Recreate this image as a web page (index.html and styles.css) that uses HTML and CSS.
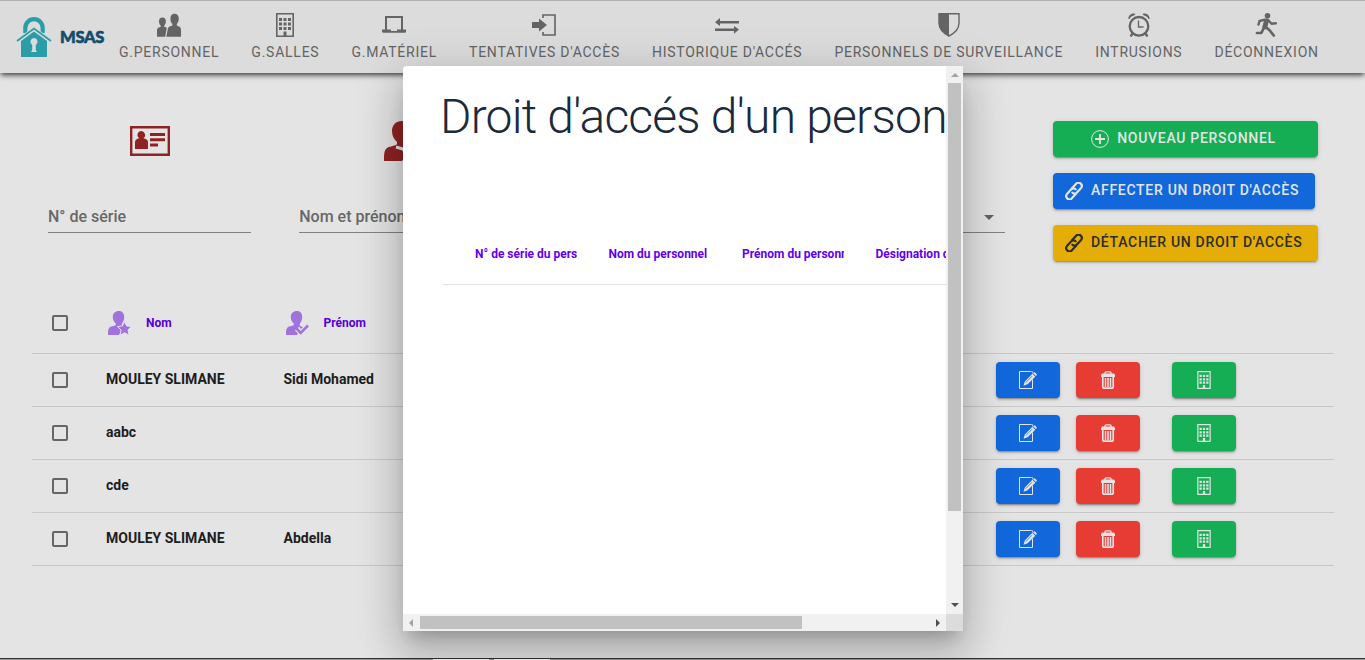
FILE: index.html
```html
<!DOCTYPE html>
<html lang="fr">
<head>
<meta charset="utf-8">
<title>MSAS</title>
<link rel="stylesheet" href="styles.css">
</head>
<body>
<svg class="sprite" xmlns="http://www.w3.org/2000/svg">
  <symbol id="building" viewBox="0 0 24 24"><path fill="none" stroke="currentColor" stroke-width="1.6" d="M3.800.8h16.400v22.400H3.800z"/><path fill="currentColor" d="M6 5h3v3H6zM10.500 5h3v3h-3zM15 5h3v3h-3zM6 9.500h3v3H6zM10.500 9.500h3v3h-3zM15 9.500h3v3h-3zM6 14h3v3H6zM10.500 14h3v3h-3zM15 14h3v3h-3zM10.500 18.500h3V23h-3z"/></symbol>
  <symbol id="link" viewBox="0 0 18 18"><g transform="rotate(-48 9 9)" fill="none" stroke="currentColor" stroke-width="2.200"><path d="M9 12.300H1.500A3.200 3.200 0 0 1-1 9a3.200 3.200 0 0 1 3-3.200h6.500a3 3 0 0 1 2.700 4"/><path d="M9 5.700h7.500A3.200 3.200 0 0 1 19 9a3.200 3.200 0 0 1-3 3.200H9.500a3 3 0 0 1-2.700-4"/></g></symbol>
  <symbol id="edit" viewBox="0 0 18 18"><path fill="none" stroke="currentColor" stroke-width="1" d="M11.500.5H.5v17h13v-9"/><path fill="none" stroke="currentColor" stroke-width=".7" d="M11 .5h2.500v2"/><path fill="currentColor" d="M4.500 14.800l1.300-4.300 7.600-7.700 2.900 2.900-7.700 7.600zM14 2.200l.8-.8c.8-.7 3.600 2 2.900 2.900l-.8.8z"/><path d="M6.800 11.600l6.200-6.400" stroke="#1268db" stroke-width=".7"/></symbol>
  <symbol id="trash" viewBox="0 0 18 18"><path fill="none" stroke="currentColor" stroke-width="1.300" d="M6 3V1.800Q6 .8 7 .8h4q1 0 1 1V3"/><path fill="currentColor" d="M3 2.600h12L16 4v2H2V4z"/><path fill="none" stroke="currentColor" stroke-width="1.700" d="M3.800 6v10q0 1.200 1.200 1.200h8q1.200 0 1.200-1.200V6"/><path fill="none" stroke="currentColor" stroke-width="1.500" d="M6.500 7v9M9 7v9M11.500 7v9"/></symbol>
  <symbol id="user" viewBox="0 0 40 40"><path fill="currentColor" d="M18 0c6 0 9 4 9 10 0 5-2 9-4 11v3c0 1 3 2 6 3L18 40H0c0-6 0-11 3-13 3-2 9-2 10-4v-2c-3-3-5-6-5-11C8 4 12 0 18 0z"/></symbol>
</svg>

<header class="topbar">
  <div class="brand">
    <svg width="36" height="42" viewBox="0 0 36 42"><g fill="none" stroke="#2b9da6"><path stroke-width="4.200" d="M9.300 17v-5a8.700 8.900 0 0 1 17.400 0v5"/></g><path fill="none" stroke="#dcdcdc" stroke-width="5" d="M3 25L18 13.500 33 25"/><path fill="none" stroke="#2b9da6" stroke-width="1.800" d="M1 25L18 12.500l17 12.500"/><path fill="#2b9da6" d="M5 25l13-9.500L31 25v16H5z"/><path fill="#dcdcdc" d="M18 22a3.800 3.800 0 0 1 1.800 7V34l1.200 2h-6l1.200-2v-5A3.800 3.800 0 0 1 18 22z"/></svg>
    <span class="brand-name">MSAS</span>
  </div>
  <nav class="nav">
    <a class="nav-item"><svg width="24" height="24" viewBox="0 0 24 24"><path fill="currentColor" d="M5.500 4.500C8 4.500 9 6.300 8.800 8.500c0 2-.8 3.500-1.600 4.200v1c1 .5 2 .7 2.600 1L8.200 23.800H0V17c0-2.300 2-2.500 3.800-3.300v-1C2.800 12 2 10.500 2 8.500 2 6 3 4.500 5.500 4.500zM17.500.8c3 0 4.300 2 4.300 5 0 2.600-1 4.200-2 5.200v1.500c1.600.8 4.200 1.200 4.200 4v7.300H9.300l1.500-7.800c.4-2.500 3-2.800 4.600-3.500V11c-1.200-1-2-2.600-2-5.200 0-3 1.300-5 4.100-5z"/></svg><span>G.PERSONNEL</span></a>
    <a class="nav-item"><svg width="24" height="24"><use href="#building"/></svg><span>G.SALLES</span></a>
    <a class="nav-item"><svg width="24" height="24" viewBox="0 0 24 24"><path fill="none" stroke="currentColor" stroke-width="2" d="M4 17V4h16v13"/><path fill="currentColor" d="M0 16.500h9V18h6v-1.500h9v1.700c0 1-.5 1.500-1.500 1.500h-21C.5 19.700 0 19 0 18.200z"/></svg><span>G.MATÉRIEL</span></a>
    <a class="nav-item"><svg width="24" height="24" viewBox="0 0 24 24"><path fill="none" stroke="currentColor" stroke-width="1.600" d="M11 5V2h12v20H11v-3"/><path fill="currentColor" d="M0 9h7V5.500l8 6.500-8 6.500V15H0z"/></svg><span>TENTATIVES D'ACCÈS</span></a>
    <a class="nav-item"><svg width="24" height="24" viewBox="0 0 24 24"><path fill="currentColor" d="M5 5L0 9.200 5 13v-2.500h19V8H5zM19 13v2.500H0V18h19v2.800l5-4.300z"/></svg><span>HISTORIQUE D'ACCÉS</span></a>
    <a class="nav-item"><svg width="24" height="24" viewBox="0 0 24 24"><path fill="none" stroke="currentColor" stroke-width="1.400" d="M2 .8h20V10c0 6-5 10.500-10 13C7 20.500 2 16 2 10z"/><path fill="currentColor" d="M2 .8h10V23C7 20.500 2 16 2 10z"/></svg><span>PERSONNELS DE SURVEILLANCE</span></a>
    <a class="nav-item"><svg width="24" height="24" viewBox="0 0 24 24"><g fill="none" stroke="currentColor" stroke-width="2.300"><circle cx="12" cy="13.300" r="9.300"/><path stroke-width="1.300" d="M11.500 7.500v6.500h5"/><path d="M6 20l-2.500 3.500M18 20l2.500 3.500"/></g><path fill="currentColor" d="M1.500 6C1 3 4-.5 8 .7 9 1 8 2 7 2.400 4.500 3.200 3.500 4 2.500 6zM22.500 6c.5-3-2.500-6.500-6.500-5.300-1 .3 0 1.300 1 1.700 2.500.8 3.500 1.600 4.500 3.600z"/></svg><span>INTRUSIONS</span></a>
    <a class="nav-item"><svg width="24" height="24" viewBox="0 0 24 24"><circle cx="12.500" cy="2.800" r="2.800" fill="currentColor"/><g fill="none" stroke="currentColor" stroke-linejoin="round" stroke-linecap="round"><path stroke-width="2.400" d="M3.500 11.500l1-3.500L9 6.800l4 .2 3.500 3.700 4.300-.4"/><path stroke-width="4.800" d="M11.300 8.500L9.800 14"/><path stroke-width="2.700" d="M9.300 14l-3 6H2M10.800 14l4 3.500 4 5"/></g></svg><span>DÉCONNEXION</span></a>
  </nav>
</header>

<main class="page">
  <section class="tools">
    <div class="filters">
      <div class="filter">
        <svg class="filter-icon" width="40" height="40" viewBox="0 0 40 40"><path fill="none" stroke="currentColor" stroke-width="2.400" d="M1.200 6.200h37.600v27.600H1.200z"/><path fill="currentColor" d="M11 10a4 4 0 0 1 2.500 7.200c2 .6 4.500 1.300 4.500 4V28H5v-6.800c0-2.700 2-3.400 4-4A4 4 0 0 1 11 10zM20 12h15v3H20zM20 17.200h15v3H20zM20 22.500h8v3h-8z"/></svg>
        <label class="field">N° de série</label>
      </div>
      <div class="filter">
        <svg class="filter-icon" width="34" height="40" viewBox="0 0 34 40"><use href="#user" width="40" height="40"/><path d="M12 26l7 2 5 8 8-10" fill="none" stroke="#e4e4e4" stroke-width="3"/></svg>
        <label class="field">Nom et prénom</label>
      </div>
      <div class="filter"><div class="filter-icon blank"></div><label class="field"></label></div>
      <div class="filter"><div class="filter-icon blank"></div><label class="field"><i class="caret"></i></label></div>
    </div>
    <div class="actions">
      <button class="btn green wide"><svg width="18" height="18" viewBox="0 0 18 18" fill="none" stroke="currentColor"><circle cx="9" cy="9" r="8.400"/><path stroke-width="1.800" d="M9 4v10M4 9h10"/></svg><span>NOUVEAU PERSONNEL</span></button>
      <button class="btn blue"><svg width="18" height="18"><use href="#link"/></svg><span>AFFECTER UN DROIT D'ACCÈS</span></button>
      <button class="btn amber"><svg width="18" height="18"><use href="#link"/></svg><span>DÉTACHER UN DROIT D'ACCÈS</span></button>
    </div>
  </section>

  <section class="table">
    <div class="row head">
      <i class="check"></i>
      <div class="cell"><svg width="26" height="26" viewBox="0 0 26 26"><use href="#user" width="24" height="24" x="2" y="1"/><path fill="currentColor" stroke="#e4e4e4" stroke-width="1" d="M18.500 11.500l2.200 4.500 4.800.6-3.500 3.400 1 5.200-4.500-2.500-4.500 2.500 1-5.200-3.500-3.400 4.800-.6z"/></svg>Nom</div>
      <div class="cell"><svg width="26" height="26" viewBox="0 0 26 26"><use href="#user" width="24" height="24" x="2" y="1"/><path fill="none" stroke="#e4e4e4" stroke-width="5.500" d="M13 18.500l4 4.500 8-8"/><path fill="none" stroke="currentColor" stroke-width="2.600" d="M12.500 18.500l4.200 4.300 7.300-7.300"/></svg>Prénom</div>
    </div>
    <div class="row"><i class="check"></i><div class="cell">MOULEY SLIMANE</div><div class="cell">Sidi Mohamed</div>
      <button class="btn blue"><svg width="18" height="18"><use href="#edit"/></svg></button><button class="btn red"><svg width="18" height="18"><use href="#trash"/></svg></button><button class="btn green"><svg width="18" height="18"><use href="#building"/></svg></button></div>
    <div class="row"><i class="check"></i><div class="cell">aabc</div><div class="cell"></div>
      <button class="btn blue"><svg width="18" height="18"><use href="#edit"/></svg></button><button class="btn red"><svg width="18" height="18"><use href="#trash"/></svg></button><button class="btn green"><svg width="18" height="18"><use href="#building"/></svg></button></div>
    <div class="row"><i class="check"></i><div class="cell">cde</div><div class="cell"></div>
      <button class="btn blue"><svg width="18" height="18"><use href="#edit"/></svg></button><button class="btn red"><svg width="18" height="18"><use href="#trash"/></svg></button><button class="btn green"><svg width="18" height="18"><use href="#building"/></svg></button></div>
    <div class="row"><i class="check"></i><div class="cell">MOULEY SLIMANE</div><div class="cell">Abdella</div>
      <button class="btn blue"><svg width="18" height="18"><use href="#edit"/></svg></button><button class="btn red"><svg width="18" height="18"><use href="#trash"/></svg></button><button class="btn green"><svg width="18" height="18"><use href="#building"/></svg></button></div>
  </section>
</main>
<footer class="strip"><i></i><i></i></footer>

<div class="dialog">
  <div class="dialog-view">
    <h1>Droit d'accés d'un personnel</h1>
    <div class="dialog-head"><span>N° de série du personnel</span><span>Nom du personnel</span><span>Prénom du personnel</span><span>Désignation de salle</span></div>
  </div>
  <div class="vbar"><i class="arrow up"></i><i class="thumb"></i><i class="arrow down"></i></div>
  <div class="hbar"><i class="arrow left"></i><i class="thumb"></i><i class="arrow right"></i></div>
  <div class="corner"></div>
</div>
</body>
</html>
```
FILE: styles.css
```css
* { box-sizing: border-box; }
body {
  margin: 0;
  height: 660px;
  overflow: hidden;
  display: flex;
  flex-direction: column;
  background: #e4e4e4;
  font-family: Roboto, sans-serif;
  font-size: 14px;
  color: #1d1d1d;
}
svg { display: block; flex: none; }
.sprite { position: absolute; width: 0; height: 0; }

.topbar {
  flex: none;
  display: flex;
  height: 73px;
  border-top: 1px solid #b0b0b0;
  background: #dcdcdc;
  box-shadow: 0 3px 5px -1px rgba(0, 0, 0, .7), 0 1px 10px rgba(0, 0, 0, .12);
}
.brand { display: flex; width: 103px; padding: 15px 0 0 16px; flex: none; }
.brand-name {
  margin: 11px 0 0 8px;
  font: 900 16.500px/20px Lato, sans-serif;
  letter-spacing: -.3px;
  color: #124d6b;
  -webkit-text-stroke: .6px #124d6b;
}
.nav { display: flex; }
.nav-item {
  display: flex;
  flex-direction: column;
  align-items: center;
  padding: 12px 16px 0;
  color: #646464;
  letter-spacing: .754px;
  line-height: 20px;
  white-space: nowrap;
}
.nav-item span { margin-top: 5px; }

.page { flex: 1; padding: 48px 31px 0 32px; }
.tools { display: flex; height: 172px; padding-left: 16px; gap: 48px; }
.filters { display: grid; grid-template-columns: repeat(4, 1fr); gap: 48px; width: 957px; }
.filter { display: flex; flex-direction: column; align-items: center; color: #8f2323; }
.filter-icon { height: 40px; }
.field {
  width: 100%;
  height: 32px;
  margin-top: 40px;
  border-bottom: 1px solid #818181;
  font-size: 16px;
  font-weight: 500;
  line-height: 31px;
  color: #686868;
}
.caret {
  display: block;
  margin: 14px 11px 0 auto;
  width: 10px;
  border: 5px solid transparent;
  border-top-color: #646464;
  border-bottom: 0;
}
.actions { display: flex; flex-direction: column; align-items: flex-start; gap: 16px; }

.btn {
  display: flex;
  align-items: center;
  justify-content: center;
  gap: 8px;
  height: 36px;
  padding: 0;
  border: 0;
  border-radius: 4px;
  font: 500 14px/20px Roboto, sans-serif;
  letter-spacing: .71px;
  white-space: nowrap;
  color: #e4e4e4;
  box-shadow: 0 3px 1px -2px rgba(0, 0, 0, .2), 0 2px 2px rgba(0, 0, 0, .14), 0 1px 5px rgba(0, 0, 0, .12);
}
.btn span { padding-bottom: 2px; }
.actions .btn { justify-content: flex-start; padding-left: 12px; }
.actions .wide { width: 265px; justify-content: center; padding: 0 4px 0 0; }
.actions .blue { width: 262px; }
.actions .amber { width: 265px; }
.green { background: #15ae54; }
.blue { background: #1268db; }
.red { background: #e63c34; }
.amber { background: #e4ad07; color: #2d2d2d; }

.row {
  display: grid;
  grid-template-columns: 74px 177.500px 1fr 64px 64px 64px;
  align-items: center;
  height: 53px;
  padding-right: 98px;
  border-bottom: 1px solid #c8c8c8;
  font-weight: 700;
}
.row.head { height: 61px; font-size: 12px; color: #5600d8; }
.cell { display: flex; align-items: center; gap: 14px; padding-bottom: 2px; }
.head .cell { padding-bottom: 0; }
.cell svg { color: #a072de; }
.row .btn { width: 64px; }
.row .red { margin-left: 16px; }
.row .green { margin-left: 48px; }
.row:not(.head) { padding-right: 146px; }
.check { width: 16px; height: 16px; margin-left: 20px; border: 2px solid #666; border-radius: 2px; }

.strip {
  display: flex;
  height: 2px;
  gap: 5px;
  padding-left: 433px;
  border-top: 1px solid #333;
  background: #999;
}
.strip i { width: 56px; background: #fff; }

.dialog {
  position: absolute;
  left: 403px;
  top: 66px;
  display: grid;
  grid-template: 548px 17px / 543px 17px;
  overflow: hidden;
  border-radius: 4px 0 0 0;
  background: #fff;
  box-shadow: 0 11px 15px -7px rgba(0, 0, 0, .2), 0 24px 38px 3px rgba(0, 0, 0, .14), 0 9px 46px 8px rgba(0, 0, 0, .12);
}
.dialog-view { overflow: hidden; padding: 21px 0 0 37px; }
.dialog-view h1 {
  margin: 0;
  font-size: 48px;
  font-weight: 300;
  line-height: 60px;
  letter-spacing: -.78px;
  white-space: nowrap;
  color: #1b2a3c;
}
.dialog-head {
  display: grid;
  grid-template-columns: repeat(4, 102px);
  column-gap: 31.500px;
  width: 700px;
  height: 61px;
  margin: 77px 0 0 3px;
  padding-left: 32px;
  border-bottom: 1px solid #e0e0e0;
  font-size: 12px;
  font-weight: 700;
  line-height: 60px;
  color: #6200ee;
}
.dialog-head span { overflow: hidden; white-space: nowrap; }
.vbar, .hbar { display: flex; align-items: center; background: #f1f1f1; }
.vbar { flex-direction: column; }
.corner { background: #dcdcdc; }
.thumb { background: #c1c1c1; }
.vbar .thumb { width: 13px; height: 428px; margin-bottom: auto; }
.hbar .thumb { width: 382px; height: 13px; margin-right: auto; }
.arrow { width: 17px; height: 17px; display: grid; place-items: center; }
.arrow::before { content: ""; border: 4px solid transparent; }
.down { padding-bottom: 1px; }
.left { padding-right: 1px; }
.up::before { border-bottom-color: #a3a3a3; border-top: 0; }
.down::before { border-top-color: #505050; border-bottom: 0; }
.left::before { border-right-color: #a3a3a3; border-left: 0; }
.right::before { border-left-color: #505050; border-right: 0; }
```
